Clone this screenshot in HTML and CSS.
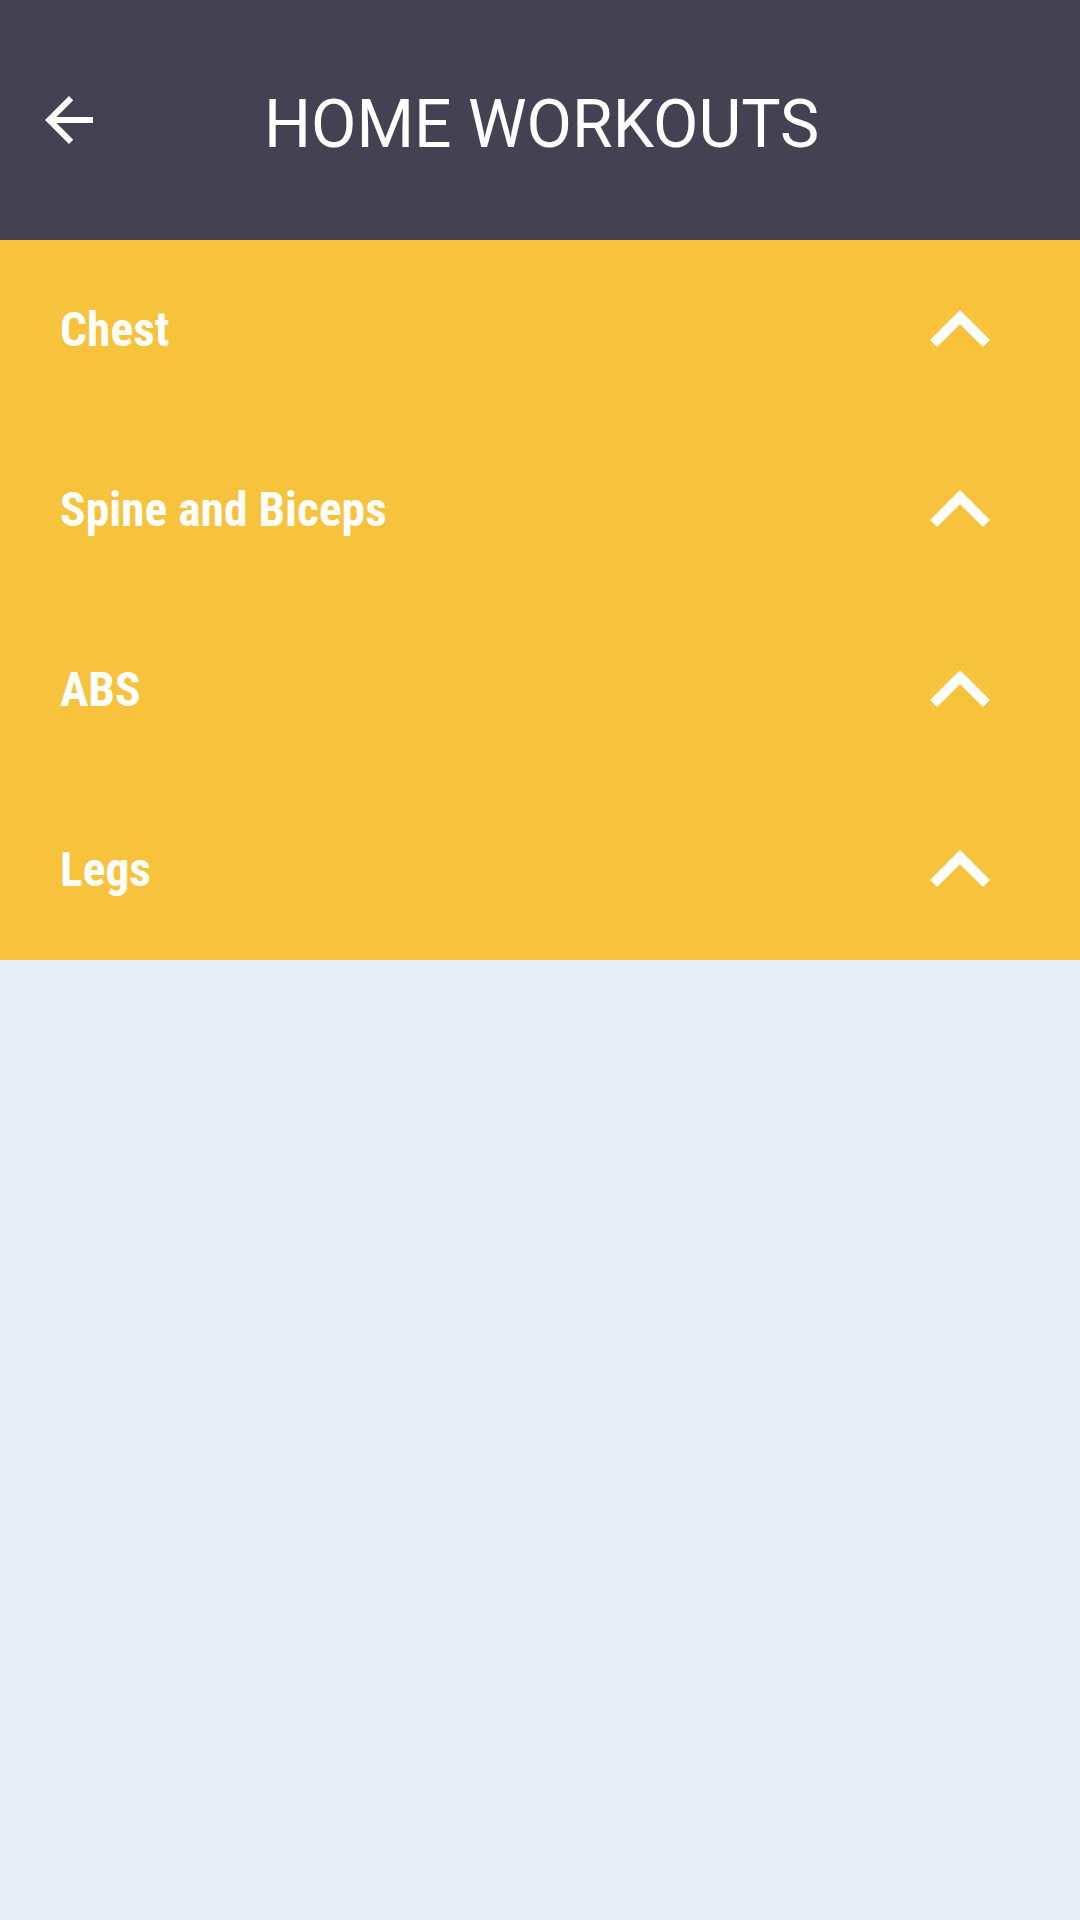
FILE: index.html
```html
<!DOCTYPE html>
<html>
  <head>
    <meta charset="UTF-8" />
    <title>Home Workouts</title>
    <link rel="stylesheet" href="styles.css">
  </head>
  <body>
    <header class="toolbar">
      <button class="back-btn" aria-label="Back">
        <svg viewBox="0 0 24 24" width="72" height="72">
          <path d="M20 11H7.83l5.59-5.59L12 4l-8 8 8 8 1.41-1.41L7.83 13H20v-2z" fill="#fff" />
        </svg>
      </button>
      <h1 class="title">HOME WORKOUTS</h1>
    </header>

    <ul class="groups">
      <li class="group">
        <span class="group-name">Chest</span>
        <svg class="chevron" viewBox="6 8 12 7.41" width="60" height="37">
          <path d="M12 8l-6 6 1.41 1.41L12 10.83l4.59 4.58L18 14z" fill="#fff" />
        </svg>
      </li>
      <li class="group">
        <span class="group-name">Spine and Biceps</span>
        <svg class="chevron" viewBox="6 8 12 7.41" width="60" height="37">
          <path d="M12 8l-6 6 1.41 1.41L12 10.83l4.59 4.58L18 14z" fill="#fff" />
        </svg>
      </li>
      <li class="group">
        <span class="group-name">ABS</span>
        <svg class="chevron" viewBox="6 8 12 7.41" width="60" height="37">
          <path d="M12 8l-6 6 1.41 1.41L12 10.83l4.59 4.58L18 14z" fill="#fff" />
        </svg>
      </li>
      <li class="group">
        <span class="group-name">Legs</span>
        <svg class="chevron" viewBox="6 8 12 7.41" width="60" height="37">
          <path d="M12 8l-6 6 1.41 1.41L12 10.83l4.59 4.58L18 14z" fill="#fff" />
        </svg>
      </li>
    </ul>
  </body>
</html>
```

FILE: styles.css
```css
* {
  box-sizing: border-box;
}

html,
body {
  margin: 0;
  padding: 0;
}

body {
  min-height: 1920px;
  background-color: #e8ecf5;
  font-family: Roboto, "Liberation Sans", sans-serif;
}

.toolbar {
  height: 240px;
  display: flex;
  align-items: center;
  padding-left: 33px;
  background-color: #444152;
}

.back-btn {
  display: flex;
  padding: 0;
  border: none;
  background: none;
  cursor: pointer;
}

.title {
  margin: 8px 0 0 159px;
  font-size: 66px;
  font-weight: 400;
  color: #fff;
}

.groups {
  list-style: none;
  margin: 0;
  padding: 0;
  background-color: #f7c23c;
}

.group {
  height: 180px;
  display: flex;
  align-items: center;
  justify-content: space-between;
  padding: 0 90px 0 60px;
  cursor: pointer;
}

.group-name {
  font-family: "Roboto Condensed", "Liberation Sans Narrow", "DejaVu Sans Condensed", sans-serif;
  font-size: 47.5px;
  font-weight: 700;
  color: #fff;
}

.chevron {
  display: block;
  margin-top: -3px;
}
```
